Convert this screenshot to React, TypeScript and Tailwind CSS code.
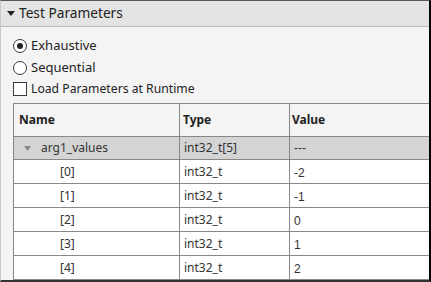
const ui = { fontFamily: '"Noto Sans", "Open Sans", sans-serif' }
const mono = { fontFamily: '"Liberation Sans", Arial, sans-serif' }

const rows = [
  { name: '[0]', type: 'int32_t', value: '-2' },
  { name: '[1]', type: 'int32_t', value: '-1' },
  { name: '[2]', type: 'int32_t', value: '0' },
  { name: '[3]', type: 'int32_t', value: '1' },
  { name: '[4]', type: 'int32_t', value: '2' },
]

function Radio({ checked, label }: { checked?: boolean; label: string }) {
  return (
    <div className="flex items-center h-[22px]">
      <span className="w-[14px] h-[14px] rounded-full border border-[#3a3a3a] bg-white flex items-center justify-center">
        {checked && <span className="w-[6px] h-[6px] rounded-full bg-[#222]" />}
      </span>
      <span className="ml-[4px] text-[13px] text-[#222]">{label}</span>
    </div>
  )
}

export default function App() {
  return (
    <div
      className="w-[431px] h-[282px] overflow-hidden flex flex-col bg-[#f4f4f4] border-t border-t-[#555] border-l border-l-[#c8c8c8] border-r-2 border-r-black border-b-2 border-b-[#333]"
      style={ui}
    >
      <div className="h-[26px] shrink-0 bg-[#e4e4e4] border-b border-[#bcbcbc] flex items-center pl-[6px]">
        <svg width="8" height="5" viewBox="0 0 8 5"><path d="M0 0H8L4 5Z" fill="#222" /></svg>
        <span className="ml-[4px] text-[13.7px] text-[#222]">Test Parameters</span>
      </div>

      <div className="flex-1 flex flex-col pl-[12px] pt-[8px] min-h-0">
        <Radio checked label="Exhaustive" />
        <Radio label="Sequential" />
        <div className="flex items-center h-[22px]">
          <span className="w-[14px] h-[14px] border border-[#3a3a3a] bg-white" />
          <span className="ml-[4px] text-[12.2px] text-[#222]">Load Parameters at Runtime</span>
        </div>

        <div className="mt-[3px] border-l border-t border-[#888] text-[12px] text-[#333]">
          <div className="flex h-[33px] border-b border-[#888] font-bold text-[#222]">
            <div className="w-[166px] border-r border-[#888] flex items-center pl-[5px]">Name</div>
            <div className="w-[110px] border-r border-[#888] flex items-center pl-[3px]">Type</div>
            <div className="flex-1 flex items-center pl-[2px]">Value</div>
          </div>
          <div className="flex h-[23px] border-b border-[#888] bg-[#d4d4d4]">
            <div className="w-[166px] border-r border-[#888] flex items-center pl-[10px]">
              <svg width="7" height="5" viewBox="0 0 7 5"><path d="M0 0H7L3.5 5Z" fill="#888" /></svg>
              <span className="ml-[10px]">arg1_values</span>
            </div>
            <div className="w-[110px] border-r border-[#888] flex items-center pl-[4px]">int32_t[5]</div>
            <div className="flex-1 flex items-center pl-[4px]" style={mono}>---</div>
          </div>
          {rows.map((r) => (
            <div key={r.name} className="flex h-[24px] border-b border-[#888] bg-white">
              <div className="w-[166px] border-r border-[#888] flex items-center pl-[46px]">{r.name}</div>
              <div className="w-[110px] border-r border-[#888] flex items-center pl-[4px]">{r.type}</div>
              <div className="flex-1 flex items-center pl-[4px] pt-[2px]" style={mono}>{r.value}</div>
            </div>
          ))}
        </div>
      </div>
    </div>
  )
}
